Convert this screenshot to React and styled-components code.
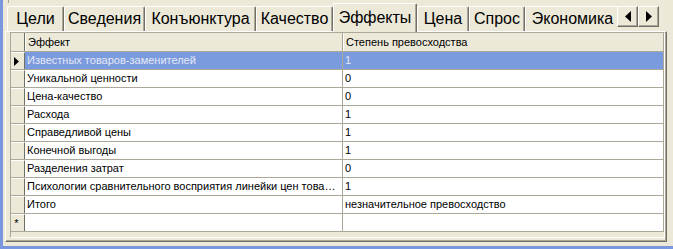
import React from "react";
import styled, { createGlobalStyle } from "styled-components";

const GlobalStyle = createGlobalStyle`
  body {
    margin: 0;
    background: #ece9d8;
  }
  * {
    box-sizing: border-box;
  }
`;

// ширины вкладок подобраны по скриншоту
const tabs = [
  { title: "Цели", width: 57 },
  { title: "Сведения", width: 81 },
  { title: "Конъюнктура", width: 111 },
  { title: "Качество", width: 77 },
  { title: "Эффекты", width: 84 },
  { title: "Цена", width: 52 },
  { title: "Спрос", width: 56 },
  { title: "Экономика", width: 95 },
];

const rows = [
  { name: "Известных товаров-заменителей", value: "1" },
  { name: "Уникальной ценности", value: "0" },
  { name: "Цена-качество", value: "0" },
  { name: "Расхода", value: "1" },
  { name: "Справедливой цены", value: "1" },
  { name: "Конечной выгоды", value: "1" },
  { name: "Разделения затрат", value: "0" },
  { name: "Психологии сравнительного восприятия линейки цен товаров", value: "1" },
  { name: "Итого", value: "незначительное превосходство" },
];

const App = () => {
  const [active, setActive] = React.useState(4);
  const [selected, setSelected] = React.useState(0);

  return (
    <>
      <GlobalStyle />
      <Window>
        <TopEdge />
        <TabBar>
          <TabList>
            {tabs.map((t, i) => (
              <Tab
                key={t.title}
                active={i === active}
                style={{ width: t.width }}
                onClick={() => setActive(i)}
              >
                {t.title}
              </Tab>
            ))}
          </TabList>
          <ArrowButton>
            <svg width="6" height="11" viewBox="0 0 6 11">
              <path d="M6 0 L0 5.5 L6 11 Z" fill="#000" />
            </svg>
          </ArrowButton>
          <ArrowButton>
            <svg width="6" height="11" viewBox="0 0 6 11">
              <path d="M0 0 L6 5.5 L0 11 Z" fill="#000" />
            </svg>
          </ArrowButton>
        </TabBar>
        <Page>
          <Grid>
            <HeaderRow>
              <IndicatorHead />
              <HeadCell>Эффект</HeadCell>
              <HeadCell>Степень превосходства</HeadCell>
            </HeaderRow>
            {rows.map((r, i) => (
              <Row key={r.name} selected={i === selected} onClick={() => setSelected(i)}>
                <Indicator>
                  {i === selected && (
                    <svg width="5" height="9" viewBox="0 0 5 9">
                      <path d="M0 0 L5 4.5 L0 9 Z" fill="#000" />
                    </svg>
                  )}
                </Indicator>
                <Cell>{r.name}</Cell>
                <Cell>{r.value}</Cell>
              </Row>
            ))}
            <Row>
              <Indicator>*</Indicator>
              <Cell />
              <Cell />
            </Row>
          </Grid>
        </Page>
      </Window>
    </>
  );
};

export default App;

const Window = styled.div`
  width: 673px;
  height: 249px;
  background: #ece9d8;
  border-left: 3px solid #7a96df;
  border-bottom: 3px solid #7a96df;
  display: flex;
  flex-direction: column;
  padding: 0 6px 4px 2px;
  font-family: "Liberation Sans", Arial, sans-serif;
`;

const TopEdge = styled.div`
  height: 3px;
  margin-left: 3px;
  border-left: 1px solid #aca899;
`;

const TabBar = styled.div`
  height: 28px;
  display: flex;
  align-items: flex-start;
  padding-left: 2px;
`;

const TabList = styled.div`
  display: flex;
  align-items: flex-start;
  height: 29px;
  width: 610px;
  overflow: hidden;
  position: relative;
  z-index: 1;
`;

const Tab = styled.div`
  flex: none;
  height: ${(p) => (p.active ? "29px" : "25px")};
  margin-top: ${(p) => (p.active ? "0" : "3px")};
  background: #ece9d8;
  border-top: 1px solid #fff;
  border-left: 1px solid #fff;
  border-right: 1px solid #716f64;
  border-radius: 2px 2px 0 0;
  box-shadow: inset -1px 0 0 #aca899;
  font-size: 16px;
  line-height: ${(p) => (p.active ? "27px" : "24px")};
  text-align: center;
  color: #000;
  white-space: nowrap;
  overflow: hidden;
  cursor: default;
`;

const ArrowButton = styled.div`
  width: 21px;
  height: 21px;
  margin-top: 3px;
  background: #ece9d8;
  border-top: 1px solid #fff;
  border-left: 1px solid #fff;
  border-right: 1px solid #716f64;
  border-bottom: 1px solid #716f64;
  box-shadow: inset -1px -1px 0 #aca899;
  display: flex;
  align-items: center;
  justify-content: center;
  &:first-of-type {
    margin-left: 8px;
  }
`;

const Page = styled.div`
  flex: 1;
  border-top: 1px solid #fff;
  border-left: 1px solid #fff;
  border-right: 1px solid #716f64;
  border-bottom: 1px solid #716f64;
  box-shadow: inset -1px -1px 0 #aca899;
  padding: 0 1px 3px 4px;
  display: flex;
`;

const Grid = styled.div`
  flex: 1;
  border: 1px solid #aca899;
  border-right-color: #fff;
  border-bottom-color: #fff;
  box-shadow: inset -1px -1px 0 #ece9d8;
  background: #ece9d8;
  overflow: hidden;
`;

const HeaderRow = styled.div`
  display: grid;
  grid-template-columns: 14px 318px 1fr;
  height: 19px;
  background: #ece9d8;
  border-bottom: 1px solid #aca899;
`;

const IndicatorHead = styled.div`
  border-right: 1px solid #716f64;
`;

const HeadCell = styled.div`
  font-size: 11px;
  line-height: 18px;
  padding-left: 2px;
  color: #000;
  border-right: 1px solid #aca899;
  border-left: 1px solid #fff;
  white-space: nowrap;
  overflow: hidden;
`;

const Row = styled.div`
  display: grid;
  grid-template-columns: 14px 318px 1fr;
  height: 18px;
  background: ${(p) => (p.selected ? "#7b9bdf" : "#fff")};
  color: ${(p) => (p.selected ? "#e4e8f4" : "#000")};
  border-bottom: 1px solid #aca899;
`;

const Indicator = styled.div`
  background: #ece9d8;
  border-top: 1px solid #fff;
  border-right: 1px solid #716f64;
  display: flex;
  align-items: center;
  justify-content: center;
  padding-right: 2px;
  font-size: 11px;
  color: #000;
`;

const Cell = styled.div`
  font-size: 11px;
  line-height: 17px;
  padding: 0 3px 0 2px;
  border-right: 1px solid #aca899;
  white-space: nowrap;
  overflow: hidden;
  text-overflow: ellipsis;
`;
